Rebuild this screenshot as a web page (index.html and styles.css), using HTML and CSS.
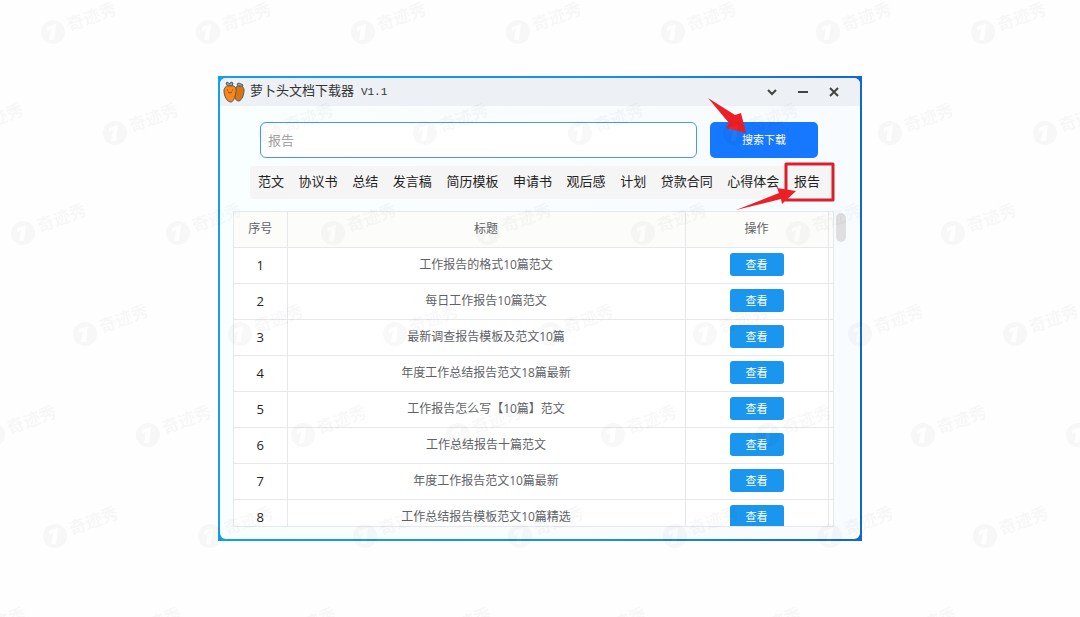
FILE: index.html
```html
<!DOCTYPE html>
<html lang="zh-CN">

<head>
    <meta charset="UTF-8">
    <meta name="viewport" content="width=device-width, initial-scale=1.0">
    <title>萝卜头文档下载器</title>
    <link rel="stylesheet" href="styles.css">
</head>

<body>
    <div class="window">
        <div class="app">
            <header class="titlebar">
                <svg class="logo" viewBox="0 0 22 22">
                    <g stroke="#55585a" stroke-width="1" stroke-linejoin="round">
                        <path d="M6 5L3 3L4 1L7 3L8 1L10 2L9 5ZM15 5L14 3L16 2L18 3L20 4L19 6Z" fill="#8fb0ac" />
                        <path d="M13 6C17 4 21 5 21 9C21 14 19 19 16 20C13 20 11 17 12 12Z" fill="#dc7416" />
                        <path d="M1 10C1 6 4 4 7 5C11 4 14 6 13 11C12 17 10 21 8 21C4 21 1 15 1 10Z" fill="#f8861a" />
                    </g>
                    <path d="M4 9H5M9 9H10M5 11Q7 13 9 11" fill="none" stroke="#8a4a12" />
                </svg>
                <h1>萝卜头文档下载器 <span>V1.1</span></h1>
                <div class="controls">
                    <button aria-label="更多"><svg viewBox="0 0 12 12"><path d="M2 4L6 8L10 4" /></svg></button>
                    <button aria-label="最小化"><svg viewBox="0 0 12 12"><path d="M1 6H11" /></svg></button>
                    <button aria-label="关闭"><svg viewBox="0 0 12 12"><path d="M2 2L10 10M10 2L2 10" /></svg></button>
                </div>
            </header>

            <form class="search" onsubmit="return false">
                <input type="text" placeholder="报告" aria-label="搜索">
                <button>搜索下载</button>
            </form>

            <nav class="tabs">
                <a href="#">范文</a>
                <a href="#">协议书</a>
                <a href="#">总结</a>
                <a href="#">发言稿</a>
                <a href="#">简历模板</a>
                <a href="#">申请书</a>
                <a href="#">观后感</a>
                <a href="#">计划</a>
                <a href="#">贷款合同</a>
                <a href="#">心得体会</a>
                <a href="#">报告</a>
            </nav>

            <div class="list">
                <div class="scroll">
                    <table>
                        <thead>
                            <tr><th class="num">序号</th><th>标题</th><th class="action">操作</th><th class="gutter"></th></tr>
                        </thead>
                        <tbody>
                            <tr><td>1</td><td>工作报告的格式10篇范文</td><td><button>查看</button></td><td></td></tr>
                            <tr><td>2</td><td>每日工作报告10篇范文</td><td><button>查看</button></td><td></td></tr>
                            <tr><td>3</td><td>最新调查报告模板及范文10篇</td><td><button>查看</button></td><td></td></tr>
                            <tr><td>4</td><td>年度工作总结报告范文18篇最新</td><td><button>查看</button></td><td></td></tr>
                            <tr><td>5</td><td>工作报告怎么写【10篇】范文</td><td><button>查看</button></td><td></td></tr>
                            <tr><td>6</td><td>工作总结报告十篇范文</td><td><button>查看</button></td><td></td></tr>
                            <tr><td>7</td><td>年度工作报告范文10篇最新</td><td><button>查看</button></td><td></td></tr>
                            <tr><td>8</td><td>工作总结报告模板范文10篇精选</td><td><button>查看</button></td><td></td></tr>
                        </tbody>
                    </table>
                </div>
                <div class="thumb"></div>
            </div>
        </div>

        <!-- red arrows and frame -->
        <svg class="notes" viewBox="0 0 644 465">
            <rect x="568" y="88" width="47" height="36" />
            <path d="M490 22L517 39L523 37L528 57L508 52L511 47Z" />
            <path d="M518 134L561 117L559 112L578 115L564 128L563 123Z" />
        </svg>
    </div>

    <svg class="watermark" aria-hidden="true">
        <defs>
            <g id="mark">
                <circle r="12" />
                <path d="M-6 -5L3 -8L1 8H-4L-2 -3L-6 -1Z" fill="#fff" />
                <text x="16" y="5" transform="rotate(-20)">奇迹秀</text>
            </g>
            <g id="row">
                <use href="#mark" x="-155" />
                <use href="#mark" />
                <use href="#mark" x="155" />
                <use href="#mark" x="310" />
                <use href="#mark" x="465" />
                <use href="#mark" x="620" />
                <use href="#mark" x="775" />
                <use href="#mark" x="930" />
                <use href="#mark" x="1085" />
            </g>
        </defs>
        <use href="#row" x="53" y="32" />
        <use href="#row" x="115" y="133" />
        <use href="#row" x="23" y="233" />
        <use href="#row" x="85" y="334" />
        <use href="#row" x="148" y="435" />
        <use href="#row" x="55" y="536" />
        <use href="#row" x="118" y="637" />
    </svg>
</body>

</html>
```
FILE: styles.css
```css
* {
    box-sizing: border-box;
}

body {
    margin: 0;
    min-height: 100vh;
    display: flex;
    align-items: center;
    justify-content: center;
    background-color: #fefefe;
    font-family: "Noto Sans CJK SC", sans-serif;
    font-size: 13px;
    color: #333;
}

button {
    font-family: inherit;
    border: none;
    padding: 0;
    cursor: pointer;
}

.window {
    position: relative;
    width: 100%;
    max-width: 644px;
    padding: 2px;
    background: linear-gradient(90deg, #12a0e8, #1b8fe6 60%, #1266d0);
}

.app {
    border-radius: 6px;
    overflow: hidden;
    padding-bottom: 12px;
    background: linear-gradient(90deg, #f9fefe, #f8fbff);
}

.titlebar {
    display: flex;
    align-items: center;
    height: 28px;
    padding: 0 20px 0 3px;
    background-color: #edf0f4;
}

.logo {
    width: 22px;
    height: 22px;
}

.titlebar h1 {
    flex: 1;
    margin: 0 0 0 5px;
    padding-bottom: 5px;
    font-size: 13px;
    font-weight: normal;
}

.titlebar h1 span {
    margin-left: 4px;
    font-family: "Liberation Mono", monospace;
    font-size: 11px;
}

.controls {
    display: flex;
    gap: 19px;
}

.controls button {
    width: 12px;
    height: 12px;
    background: none;
}

.controls svg {
    display: block;
    width: 12px;
    height: 12px;
    fill: none;
    stroke: #444;
    stroke-width: 2;
}

.search {
    display: flex;
    gap: 13px;
    margin: 16px 42px 8px 40px;
}

.search input {
    flex: 1;
    min-width: 0;
    height: 36px;
    padding: 0 7px 2px;
    border: 1px solid #4a98e6;
    border-radius: 6px;
    background-color: #fff;
    font-family: inherit;
    font-size: 13px;
}

.search input::placeholder {
    color: #a4a4a4;
}

.search button {
    width: 108px;
    height: 36px;
    padding-bottom: 2px;
    border-radius: 5px;
    background-color: #1677ff;
    color: #fff;
    font-size: 11px;
}

.tabs {
    display: flex;
    align-items: center;
    justify-content: space-between;
    height: 33px;
    margin: 0 26px 12px 30px;
    padding: 0 14px 4px 8px;
    border-radius: 4px;
    background-color: #f5f5f5;
}

.tabs a {
    color: #222;
    text-decoration: none;
    white-space: nowrap;
}

.list {
    display: flex;
    gap: 2px;
    margin: 0 14px 0 13px;
}

.scroll {
    flex: 1;
    max-height: 316px;
    overflow: hidden;
    border: 1px solid #e6e8eb;
    background-color: #fff;
}

.thumb {
    width: 10px;
    height: 29px;
    margin-top: 2px;
    border-radius: 5px;
    background-color: #dfdfe1;
}

table {
    width: 100%;
    table-layout: fixed;
    border-collapse: collapse;
    font-family: "Open Sans", "Noto Sans CJK SC", sans-serif;
    font-size: 12px;
    color: #606266;
}

th,
td {
    height: 36px;
    padding: 0 0 2px;
    text-align: center;
    border-right: 1px solid #e6e8eb;
    border-bottom: 1px solid #e6e8eb;
}

th {
    height: 35px;
    background-color: #fcfcfa;
    font-weight: normal;
}

th:last-child,
td:last-child {
    border-right: none;
}

td:first-child {
    padding-bottom: 1px;
    font-size: 13px;
    font-weight: 500;
    color: #222;
}

.num {
    width: 53px;
}

.action {
    width: 143px;
}

.gutter {
    width: 5px;
}

td button {
    display: block;
    width: 54px;
    height: 23px;
    margin: 0 auto;
    padding-bottom: 1px;
    border-radius: 3px;
    background-color: #1a96ee;
    color: #fff;
    font-size: 11px;
}

.notes {
    position: absolute;
    top: 0;
    left: 0;
    width: 100%;
    pointer-events: none;
    fill: #ec1f27;
}

.notes rect {
    fill: none;
    stroke: #dc1f2c;
    stroke-width: 3;
    stroke-linejoin: round;
}

.watermark {
    position: absolute;
    top: 0;
    left: 0;
    width: 100%;
    height: 100%;
    pointer-events: none;
    opacity: 0.03;
    font-size: 17px;
    font-weight: bold;
}
```
